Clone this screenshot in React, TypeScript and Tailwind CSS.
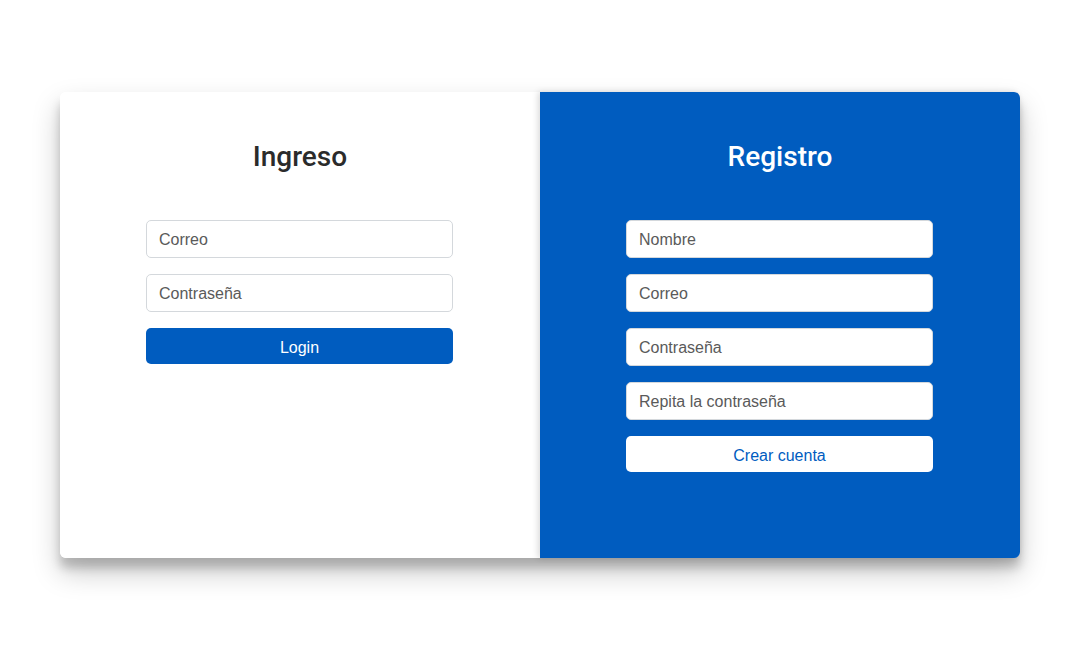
import React from "react";

const inputBase =
  "block w-full h-[38px] px-3 text-[16px] rounded-[5px] border border-[#d4d8dc] bg-white text-[#495057] placeholder:text-[#5a5a5a] outline-none";

export default function App() {
  return (
    <div
      className="min-h-screen w-full bg-white flex items-center justify-center pl-[5px]"
      style={{ fontFamily: '"Liberation Sans", Arial, sans-serif' }}
    >
      <div className="flex w-[960px] h-[466px] rounded-[6px] shadow-[0_14px_28px_rgba(0,0,0,0.22),0_10px_10px_rgba(0,0,0,0.18)]">
        <div className="w-1/2 bg-white rounded-l-[6px] flex flex-col items-center pt-[48px]">
          <h3 className="text-[28px] leading-[1.2] font-medium text-[#2b2b2b] mb-[47px] font-[Roboto]">Ingreso</h3>
          <form className="w-[308px] flex flex-col gap-4 pr-[1px]" onSubmit={(e) => e.preventDefault()}>
            <input className={inputBase + " pt-[2px]"} placeholder="Correo" />
            <input className={inputBase + " pt-[2px]"} type="password" placeholder="Contraseña" />
            <button className="h-[36px] w-full rounded-[5px] bg-[#005cbf] text-white text-[16px] pt-[3px]">Login</button>
          </form>
        </div>
        <div className="w-1/2 bg-[#005cbf] rounded-r-[6px] flex flex-col items-center pt-[48px] shadow-[-2px_0_6px_rgba(0,0,0,0.15)]">
          <h3 className="text-[28px] leading-[1.2] font-medium text-white mb-[47px] font-[Roboto]">Registro</h3>
          <form className="w-[308px] flex flex-col gap-4 pr-[1px]" onSubmit={(e) => e.preventDefault()}>
            <input className={inputBase + " pt-[2px]"} placeholder="Nombre" />
            <input className={inputBase + " pt-[2px]"} placeholder="Correo" />
            <input className={inputBase + " pt-[2px]"} type="password" placeholder="Contraseña" />
            <input className={inputBase + " pt-[2px]"} type="password" placeholder="Repita la contraseña" />
            <button className="h-[36px] w-full rounded-[5px] bg-white text-[#005cbf] text-[16px] pt-[3px]">Crear cuenta</button>
          </form>
        </div>
      </div>
    </div>
  );
}
